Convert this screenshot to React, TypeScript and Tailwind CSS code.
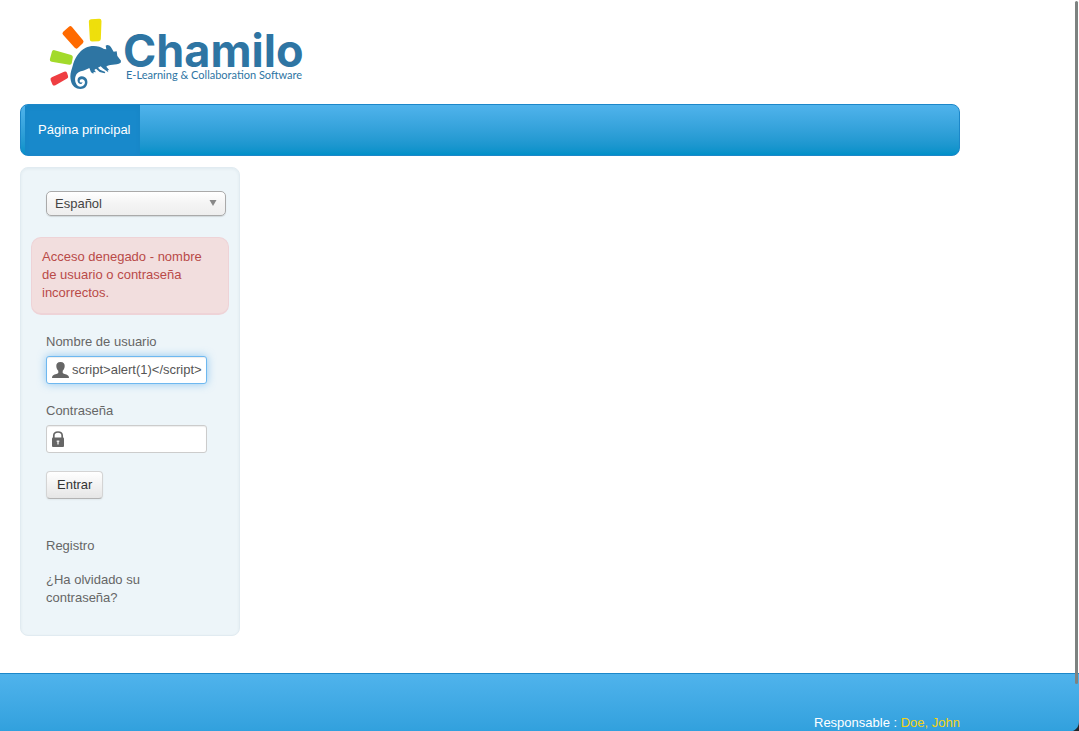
import { useState } from 'react';

function Chameleon() {
  return (
    <svg viewBox="24 24 222 216" className="h-[72px] w-[74px] shrink-0" aria-hidden="true">
      <g strokeWidth="13" strokeLinejoin="round">
        <path d="M153 34 178 33 176 87 156 88Z" fill="#eedf0c" stroke="#eedf0c" />
        <path d="M74 70 91 55 124 95 109 109Z" fill="#ff6a00" stroke="#ff6a00" />
        <path d="M42 127 92 141 89 158 36 149Z" fill="#a3da2b" stroke="#a3da2b" />
        <path d="M38 208 75 191 78 200 43 220Z" fill="#ef3e42" stroke="#ef3e42" />
      </g>
      <path
        fill="#2e75a3"
        d="M93 214C88 195 94 181 98 168C103 145 116 124 137 113C153 105 178 106 192 117L199 118L197 107C202 103 209 106 213 112L221 125L230 124L232 138L243 152L242 158C235 163 226 163 218 164C207 165 201 166 199 170L208 181L203 180L205 187L190 176L182 169L174 173L180 179L196 186L194 190L179 186L168 176L163 180L168 187L161 186L160 191L153 187L148 174C139 178 134 182 126 183C116 184 108 192 106 201C103 214 109 229 121 230C132 230 137 221 134 213C131 206 121 206 119 212C118 217 123 220 127 216C128 225 115 224 113 214C110 201 124 195 135 202C146 209 144 228 132 235C115 242 97 232 93 214Z"
      />
    </svg>
  );
}

function UserIcon() {
  return (
    <svg viewBox="0 0 17 16" className="pointer-events-none absolute left-[6px] top-[6px] h-4 w-[17px]" fill="#666" aria-hidden="true">
      <path d="M8.500 0C5.400 0 4.200 1.700 4.300 4C4.400 6.500 5.400 7.700 6.300 8.800V11C5.500 12 1.500 12.300 .5 14C.1 14.700 0 16 0 16H17C17 16 16.900 14.700 16.500 14C15.500 12.300 11.500 12 10.700 11V8.800C11.600 7.700 12.600 6.500 12.700 4C12.800 1.700 11.600 0 8.500 0Z" />
    </svg>
  );
}

function LockIcon() {
  return (
    <svg viewBox="0 0 12 16" className="pointer-events-none absolute left-[6px] top-[6px] h-4 w-3" aria-hidden="true">
      <path d="M1.800 8V4.700C1.800 2.300 3.400 1 6 1S10.200 2.300 10.200 4.700V8" fill="none" stroke="#666" strokeWidth="1.700" />
      <rect y="6.500" width="12" height="9.500" rx="1" fill="#666" />
      <path d="M4.700 9.500H7.300V11H6.700V13.500H5.300V11H4.700Z" fill="#eee" />
    </svg>
  );
}

export default function App() {
  const [user, setUser] = useState('script>alert(1)</script>');
  const [password, setPassword] = useState('');

  return (
    <div className="relative flex h-screen flex-col overflow-hidden bg-white font-['Liberation_Sans',Arial,sans-serif] text-[13px] leading-[18px] text-[#666]">
      <div className="mx-5 max-w-[940px] shrink-0">
        <header className="pt-[18px]">
          <a href="#" className="ml-7 flex h-[72px] w-fit text-[#2e75a3]" aria-label="Chamilo">
            <Chameleon />
            <span className="flex flex-col pl-px pt-3.5">
              <span className="whitespace-nowrap font-[Inter,sans-serif] text-[45px] font-bold leading-[38px]">Chamilo</span>
              <span className="whitespace-nowrap pl-[3px] font-[Lato,sans-serif] text-[11px] leading-[10px]">E-Learning &amp; Collaboration Software</span>
            </span>
          </a>
        </header>

        <nav className="mt-3.5 flex h-[52px] overflow-hidden rounded-lg border border-[#1c87c9] bg-linear-to-b from-[#4fb3ec] to-[#0090c8] pl-1">
          <a href="#" className="flex items-center bg-[#1889cb] pl-[13px] pr-[9px] text-white shadow-[inset_0_2px_6px_rgba(0,0,0,0.03)]">
            Página principal
          </a>
        </nav>

        <aside className="mt-[11px] w-[220px] rounded-lg border border-[#e1ebf1] bg-[#edf5f9] px-[10px] pb-7 pt-[23px] shadow-[inset_0_1px_3px_rgba(0,60,90,0.06)]">
          <div className="relative ml-[15px] w-[180px]">
            <select
              aria-label="Idioma"
              className="block h-[25px] w-full appearance-none rounded-[5px] border border-[#aaa] bg-linear-to-b from-white via-[#f4f4f4] to-[#eee] px-2 text-[13px] leading-[18px] text-[#444] shadow-[0_1px_1px_rgba(0,0,0,0.12)] outline-none"
            >
              <option>Español</option>
            </select>
            <svg viewBox="0 0 8 6" className="pointer-events-none absolute right-[9px] top-[9px] h-1.5 w-2" aria-hidden="true">
              <path d="M.5 0H7.500L4 6Z" fill="#888" />
            </svg>
          </div>

          <div role="alert" className="mt-[21px] rounded-[10px] border border-b-2 border-[#eed3d7] bg-[#f2dede] pb-[11px] pl-[10px] pr-5 pt-[10px] text-[#b94a48]">
            Acceso denegado - nombre de usuario o contraseña incorrectos.
          </div>

          <form className="ml-[15px] mt-[18px]" onSubmit={(event) => event.preventDefault()}>
            <label htmlFor="login" className="block">Nombre de usuario</label>
            <div className="relative mt-[5px] w-[161px]">
              <input
                id="login"
                type="text"
                value={user}
                onChange={(event) => setUser(event.target.value)}
                className="block h-7 w-full rounded-[3px] border border-[#6eb8f0] bg-white pb-0.5 pl-[25px] pr-1 text-[13px] leading-[18px] text-[#555] shadow-[inset_0_1px_1px_rgba(0,0,0,0.07),0_0_8px_rgba(82,168,236,0.6)] outline-none"
              />
              <UserIcon />
            </div>
            <label htmlFor="password" className="mt-[18px] block">Contraseña</label>
            <div className="relative mt-[5px] w-[161px]">
              <input
                id="password"
                type="password"
                value={password}
                onChange={(event) => setPassword(event.target.value)}
                className="block h-7 w-full rounded-[3px] border border-[#ccc] bg-white pb-0.5 pl-[25px] pr-1 text-[13px] leading-[18px] text-[#555] shadow-[inset_0_1px_1px_rgba(0,0,0,0.07)] outline-none"
              />
              <LockIcon />
            </div>
            <button
              type="submit"
              className="mt-[18px] block h-7 rounded-[4px] border border-[#d4d4d4] border-b-[#b3b3b3] bg-linear-to-b from-white to-[#e6e6e6] px-[10px] text-[13px] leading-[18px] text-[#333] shadow-[0_1px_2px_rgba(0,0,0,0.05)]"
            >
              Entrar
            </button>
          </form>

          <ul className="ml-[15px] mt-[38px] flex w-[130px] flex-col gap-4">
            <li><a href="#registro">Registro</a></li>
            <li><a href="#recuperar">¿Ha olvidado su contraseña?</a></li>
          </ul>
        </aside>
      </div>

      <footer className="mt-[37px] h-[110px] shrink-0 border-t border-[#1c87c9] bg-linear-to-b from-[#4fb3ec] to-[#0090d0] pt-10 text-white">
        <p className="mx-5 max-w-[940px] text-right">
          Responsable : <a href="#contacto" className="text-[#f5d312]">Doe, John</a>
        </p>
      </footer>

      <div className="absolute right-px top-px h-[683px] w-[3px] rounded-full bg-[#7d8280]" aria-hidden="true" />
      <svg viewBox="0 0 6 10" className="absolute bottom-0 right-0 h-2.5 w-1.5" aria-hidden="true">
        <path d="M6 0V10H0C4 8 6 5 6 0Z" fill="#22252a" />
      </svg>
    </div>
  );
}
